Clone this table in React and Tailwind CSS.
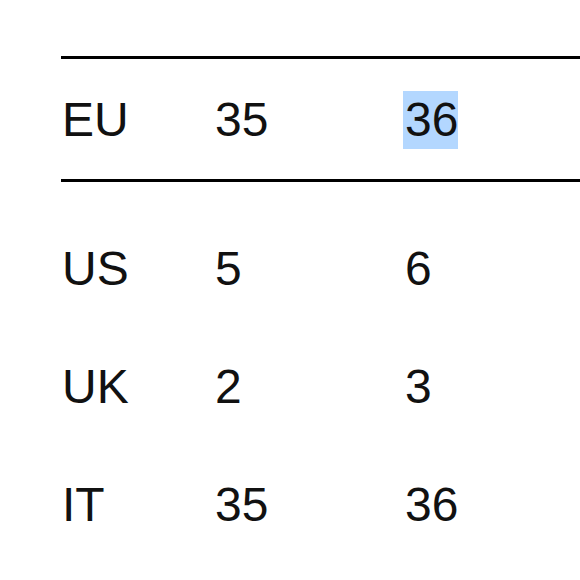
const header = ['EU', '35', '36'];

const rows = [
  ['US', '5', '6'],
  ['UK', '2', '3'],
  ['IT', '35', '36'],
];

const Cells = ({ cells, highlight = false }) => (
  <>
    <div className="w-[153px] shrink-0">{cells[0]}</div>
    <div className="w-[189px] shrink-0">{cells[1]}</div>
    <div className="shrink-0">
      {highlight ? (
        <span className="inline-block bg-[#b3d7ff] ml-[-1px] pl-[2px]">{cells[2]}</span>
      ) : (
        <span className="pl-[1px]">{cells[2]}</span>
      )}
    </div>
  </>
);

export default function App() {
  return (
    <div
      className="w-[580px] h-[580px] overflow-hidden bg-white text-[#111] text-[48px] leading-[58px] pt-[56px] pl-[61px]"
      style={{ fontFamily: '"Liberation Sans", Arial, sans-serif' }}
    >
      {/* Header */}
      <div className="w-[600px] border-y-[3px] border-black">
        <div className="flex pt-[32px] pb-[30px] ml-[1px]">
          <Cells cells={header} highlight />
        </div>
      </div>

      {/* Body */}
      <div className="pt-[28px] ml-[1px]">
        {rows.map((row) => (
          <div key={row[0]} className="flex py-[30px]">
            <Cells cells={row} />
          </div>
        ))}
      </div>
    </div>
  );
}
